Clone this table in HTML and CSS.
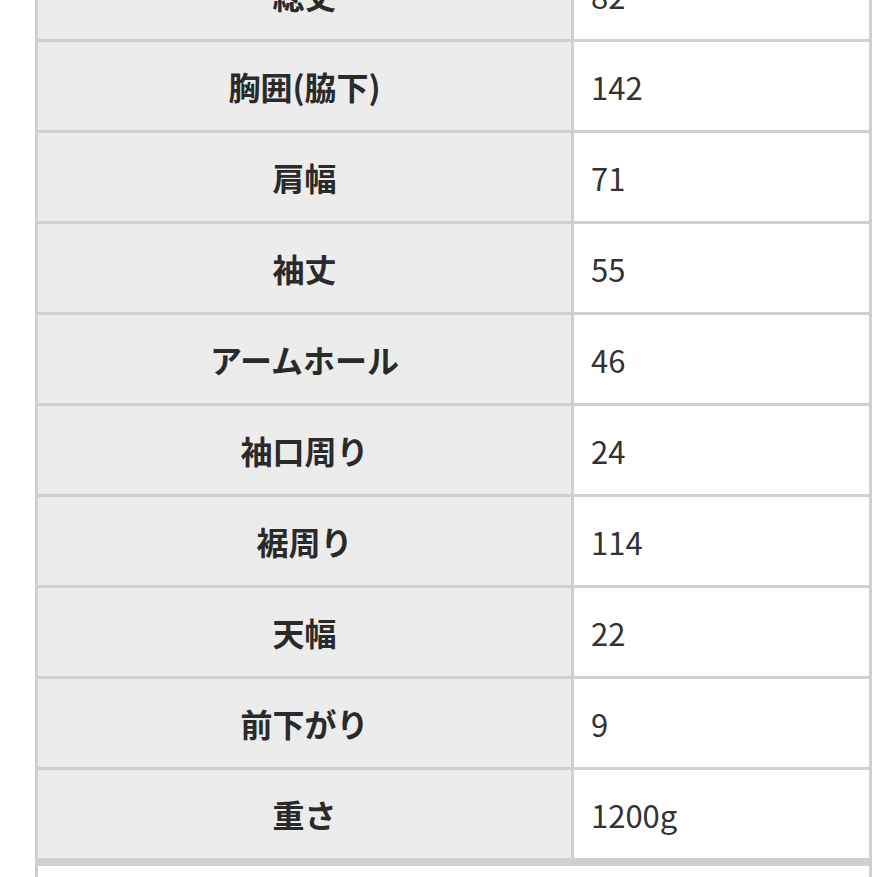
FILE: index.html
```html
<!DOCTYPE html>
<html lang="ja">
<head>
<meta charset="utf-8">
<title>サイズ表</title>
<link rel="stylesheet" href="styles.css">
</head>
<body>
<div class="page">
  <table class="size-table">
    <tbody>
      <tr><th>総丈</th><td>82</td></tr>
      <tr><th>胸囲(脇下)</th><td>142</td></tr>
      <tr><th>肩幅</th><td>71</td></tr>
      <tr><th>袖丈</th><td>55</td></tr>
      <tr><th>アームホール</th><td>46</td></tr>
      <tr><th>袖口周り</th><td>24</td></tr>
      <tr><th>裾周り</th><td>114</td></tr>
      <tr><th>天幅</th><td>22</td></tr>
      <tr><th>前下がり</th><td>9</td></tr>
      <tr><th>重さ</th><td>1200g</td></tr>
    </tbody>
  </table>
  <div class="next-block">
    <div class="next-inner"></div>
  </div>
</div>
</body>
</html>
```

FILE: styles.css
```css
html, body {
  margin: 0;
  padding: 0;
  background: #ffffff;
}

body {
  font-family: "Noto Sans CJK JP", "Noto Sans", sans-serif;
  color: #2b2b2b;
  overflow: hidden;
}

.page {
  margin-left: 35px;
  width: 837px;
}

.size-table {
  margin-top: -52px;
  width: 837px;
  border-collapse: separate;
  border-spacing: 3px;
  background: #cfcfcf;
  table-layout: fixed;
}

.size-table th,
.size-table td {
  height: 88px;
  padding: 0;
  line-height: 1;
  vertical-align: middle;
}

.size-table th {
  width: 533px;
  background: #ececec;
  font-size: 32px;
  font-weight: 700;
  text-align: center;
  color: #2a2a2a;
}

.size-table td {
  background: #ffffff;
  font-size: 31px;
  font-weight: 400;
  text-align: left;
  padding-left: 17px;
  color: #333333;
}

.next-block {
  background: #cfcfcf;
  padding: 6px 3px 0;
  margin-top: -1px;
}

.next-inner {
  background: #ffffff;
  height: 40px;
}
```
